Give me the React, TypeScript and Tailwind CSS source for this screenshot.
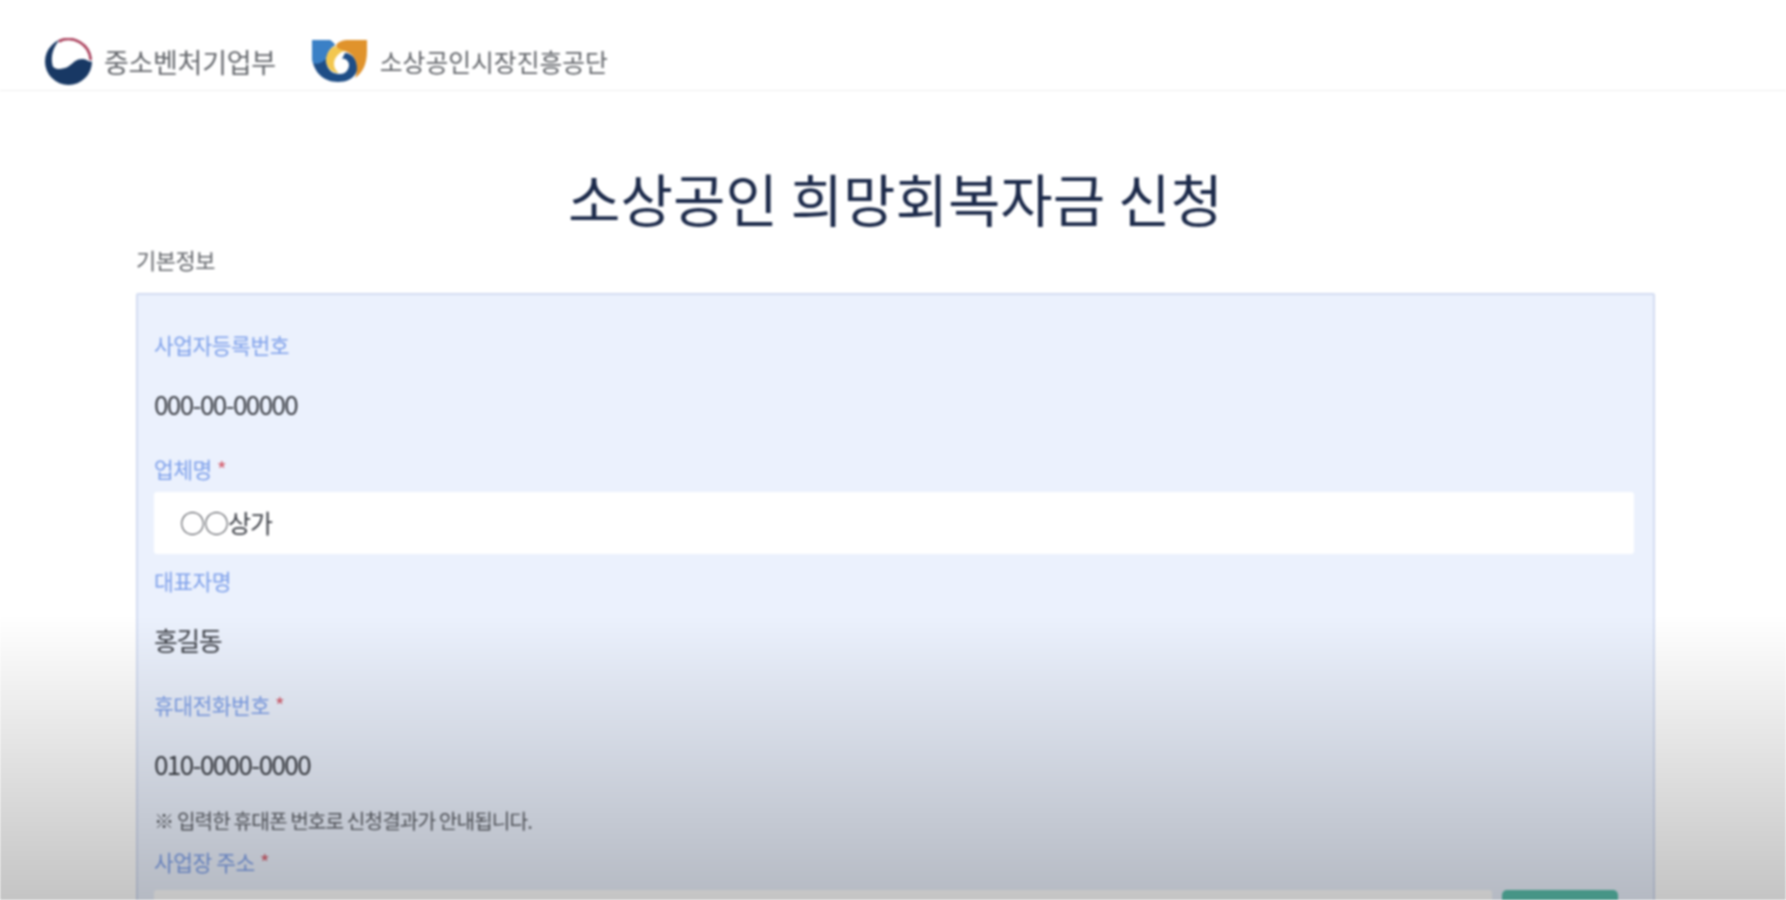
const kr = "font-['Noto_Sans_CJK_KR','Noto_Sans',sans-serif]";

function MinistryLogo() {
  return (
    <svg width="47" height="47" viewBox="0 0 48 48" className="shrink-0">
      <circle cx="24" cy="24" r="24" fill="#183864" />
      <path d="M8 29C5 18 9 9 14 3 18 0 24 0 28 0 40 1 48 12 48 24L46 24C43 23 40 20 34 22 28 24 26 30 19 31 15 32 11 32 8 29Z" fill="#ffffff" />
      <path d="M14 3.5A22.6 22.6 0 0 1 46.6 22.5" stroke="#ad4560" strokeWidth="2.8" fill="none" />
    </svg>
  );
}

function AgencyLogo() {
  return (
    <svg width="55" height="44" viewBox="0 0 55 44" className="shrink-0">
      <path d="M0 1H16C19 1 21 3 23 6 15 10 13 20 15 26 17 33 23 35 28 35 34 35 37 30 37 26 37 22 33 19 30 20L33 14C40 14 47 22 45 32 42 40 34 43 26 43 11 43 0 32 0 16Z" fill="#1e4d86" />
      <path d="M0 1H16C19 1 21 3 23 6 17 9 14 15 14 20 10 24 4 26 1 24 0 20 0 18 0 16Z" fill="#3a80c6" />
      <path d="M24 6C27 2 32 1 36 1H55V12C55 26 50 34 43 39 46 32 46 22 40 16 36 12 30 11 26 12Z" fill="#e0932c" />
      <path d="M23 7C26 10 30 11 33 12 27 13 22 19 22 25 22 29 24 32 27 34 20 34 15 29 14 22 14 15 18 9 23 7Z" fill="#f3c74f" />
    </svg>
  );
}

function Label({ text, required }: { text: string; required?: boolean }) {
  return (
    <div className="flex h-[32px] items-center text-[21.5px] leading-none tracking-[-0.5px] text-[#7ea0ea]">
      {text}
      {required && <span className="ml-[5px] text-[#d4606f]">*</span>}
    </div>
  );
}

function Value({ text }: { text: string }) {
  return (
    <div className="flex h-[46px] items-center text-[26px] leading-none tracking-[-1.6px] text-[#3c3f46]">
      {text}
    </div>
  );
}

export default function App() {
  return (
    <div className={`relative h-[900px] w-full overflow-hidden bg-white blur-[0.8px] ${kr}`}>
      <header className="flex h-[91px] items-center border-b border-[#eeeeee] pt-[32px] pl-[45px]">
        <div className="flex items-center gap-[12px]">
          <MinistryLogo />
          <span className="text-[27px] leading-none tracking-[-0.3px] text-[#63666b]">중소벤처기업부</span>
        </div>
        <div className="ml-[36px] flex items-center gap-[13px]">
          <AgencyLogo />
          <span className="text-[24.8px] leading-none text-[#63666b]">소상공인시장진흥공단</span>
        </div>
      </header>

      <main className="pr-[131px] pl-[136px]">
        <h1 className="mt-[74px] text-center text-[57px] leading-[64px] font-normal text-[#1c2a4a]">
          소상공인 희망회복자금 신청
        </h1>
        <h2 className="mt-[15px] text-[22px] leading-[30px] font-normal tracking-[-0.5px] text-[#63666b]">기본정보</h2>
        <section className="mt-[19px] h-[640px] rounded-[2px] border-2 border-[#d3dcf1] bg-[#ebf1fd] pr-[17px] pl-[16px] pt-[34px]">
          <Label text="사업자등록번호" />
          <div className="mt-[20px]"><Value text="000-00-00000" /></div>
          <div className="mt-[26px]"><Label text="업체명" required /></div>
          <div className="mt-[7px] flex h-[62px] w-[1480px] items-center rounded-[3px] bg-white pl-[26px] text-[25px] tracking-[-1px] text-[#3c3f46]">
            ○○상가
          </div>
          <div className="mt-[11px]"><Label text="대표자명" /></div>
          <div className="mt-[20px]"><Value text="홍길동" /></div>
          <div className="mt-[26px]"><Label text="휴대전화번호" required /></div>
          <div className="mt-[20px]"><Value text="010-0000-0000" /></div>
          <div className="mt-[20px] flex h-[28px] items-center text-[20.2px] leading-none tracking-[-0.9px] text-[#5c5f66]">
            ※ 입력한 휴대폰 번호로 신청결과가 안내됩니다.
          </div>
          <div className="mt-[11px]"><Label text="사업장 주소" required /></div>
          <div className="mt-[12px] flex gap-[10px]">
            <div className="h-[62px] w-[1338px] rounded-[3px] bg-white" />
            <div className="h-[62px] w-[116px] rounded-[5px] bg-[#5ac0ad]" />
          </div>
        </section>
      </main>

      <div className="absolute inset-x-0 bottom-0 h-[285px] bg-linear-to-b from-black/0 to-black/[0.23]" />
    </div>
  );
}
